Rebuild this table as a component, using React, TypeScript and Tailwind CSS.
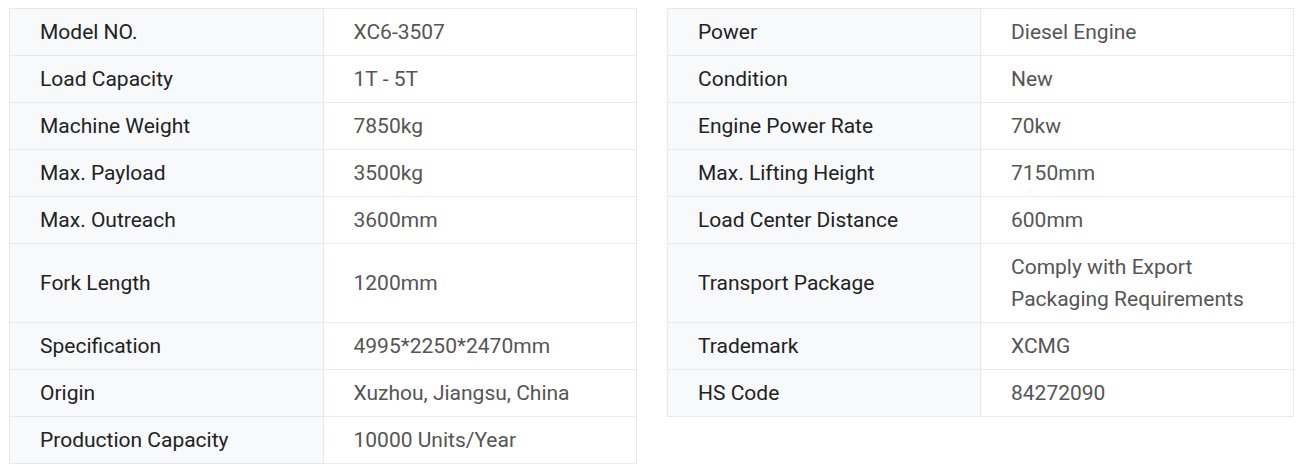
import React from "react";

const left: [string, React.ReactNode][] = [
  ["Model NO.", "XC6-3507"],
  ["Load Capacity", "1T - 5T"],
  ["Machine Weight", "7850kg"],
  ["Max. Payload", "3500kg"],
  ["Max. Outreach", "3600mm"],
  ["Fork Length", "1200mm"],
  ["Specification", "4995*2250*2470mm"],
  ["Origin", "Xuzhou, Jiangsu, China"],
  ["Production Capacity", "10000 Units/Year"],
];

const right: [string, React.ReactNode][] = [
  ["Power", "Diesel Engine"],
  ["Condition", "New"],
  ["Engine Power Rate", "70kw"],
  ["Max. Lifting Height", "7150mm"],
  ["Load Center Distance", "600mm"],
  [
    "Transport Package",
    <>
      Comply with Export
      <br />
      Packaging Requirements
    </>,
  ],
  ["Trademark", "XCMG"],
  ["HS Code", "84272090"],
];

function Table({
  rows,
  width,
  tallSingle,
}: {
  rows: [string, React.ReactNode][];
  width: string;
  tallSingle?: number;
}) {
  return (
    <table className={`${width} border-collapse table-fixed`}>
      <tbody>
        {rows.map(([k, v], i) => {
          const pad = i === tallSingle ? "py-[23px]" : "py-[7px]";
          return (
            <tr key={i}>
              <td
                className={`w-1/2 border border-[#e6e9ee] bg-[#f8f9fb] pl-[30px] pr-3 ${pad} leading-[32px] text-[21px] text-[#222222] align-middle`}
              >
                {k}
              </td>
              <td
                className={`w-1/2 border border-[#e6e9ee] bg-white pl-[30px] pr-3 ${pad} leading-[32px] text-[21px] text-[#555555] align-middle`}
              >
                {v}
              </td>
            </tr>
          );
        })}
      </tbody>
    </table>
  );
}

export default function App() {
  return (
    <div
      className="w-[1303px] h-[468px] bg-white flex items-start gap-[30px] pl-[9px] pt-[8px]"
      style={{ fontFamily: "Roboto, 'Liberation Sans', sans-serif" }}
    >
      <Table rows={left} width="w-[628px]" tallSingle={5} />
      <Table rows={right} width="w-[627px]" />
    </div>
  );
}
